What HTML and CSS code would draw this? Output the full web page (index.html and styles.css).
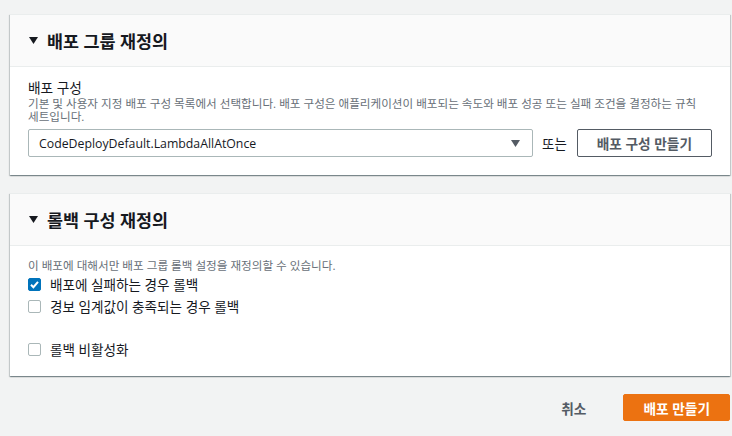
FILE: index.html
```
<!DOCTYPE html>
<html lang="ko">
<head>
<meta charset="utf-8">
<link rel="stylesheet" href="styles.css">
</head>
<body>
<section class="card">
  <div class="card-header">
    <svg class="caret" width="9" height="7" viewBox="0 0 9 7"><path d="M0 0H9L4.5 7Z" fill="#16191f"/></svg>
    <h2 class="title">배포 그룹 재정의</h2>
  </div>
  <div class="card-body body-config">
    <div class="label">배포 구성</div>
    <div class="desc">기본 및 사용자 지정 배포 구성 목록에서 선택합니다. 배포 구성은 애플리케이션이 배포되는 속도와 배포 성공 또는 실패 조건을 결정하는 규칙 세트입니다.</div>
    <div class="select-row">
      <div class="select">
        <span class="select-value">CodeDeployDefault.LambdaAllAtOnce</span>
        <svg class="select-caret" width="9" height="7" viewBox="0 0 9 7"><path d="M0 0H9L4.5 7Z" fill="#545b64"/></svg>
      </div>
      <span class="or">또는</span>
      <button class="btn-normal">배포 구성 만들기</button>
    </div>
  </div>
</section>

<section class="card card-second">
  <div class="card-header">
    <svg class="caret" width="9" height="7" viewBox="0 0 9 7"><path d="M0 0H9L4.5 7Z" fill="#16191f"/></svg>
    <h2 class="title">롤백 구성 재정의</h2>
  </div>
  <div class="card-body body-rollback">
    <div class="desc desc-single">이 배포에 대해서만 배포 그룹 롤백 설정을 재정의할 수 있습니다.</div>
    <label class="check-row">
      <span class="box checked"><svg width="13" height="13" viewBox="0 0 13 13"><path d="M3 6.8L5.4 9.2L10 3.8" fill="none" stroke="#fff" stroke-width="2"/></svg></span>
      <span class="check-text">배포에 실패하는 경우 롤백</span>
    </label>
    <label class="check-row">
      <span class="box"></span>
      <span class="check-text">경보 임계값이 충족되는 경우 롤백</span>
    </label>
    <label class="check-row check-separate">
      <span class="box"></span>
      <span class="check-text">롤백 비활성화</span>
    </label>
  </div>
</section>

<div class="footer">
  <button class="btn-link">취소</button>
  <button class="btn-primary">배포 만들기</button>
</div>
</body>
</html>
```

FILE: styles.css
```
html, body {
  margin: 0;
  background: #f2f3f3;
}
body {
  padding: 14px 2px 0 10px;
  font-family: "Open Sans", "Noto Sans CJK KR", sans-serif;
  font-size: 13.7px;
  color: #16191f;
}
.card {
  background: #fff;
  border-top: 1px solid #eaeded;
  box-shadow: 0 1px 1px 0 rgba(0, 28, 36, 0.3), 1px 1px 1px 0 rgba(0, 28, 36, 0.15), -1px 1px 1px 0 rgba(0, 28, 36, 0.15);
}
.card-second {
  margin-top: 18px;
}
.card-header {
  height: 51px;
  background: #fafafa;
  border-bottom: 1px solid #eaeded;
  display: flex;
  align-items: center;
  padding: 0 18px 0 19px;
  gap: 9px;
}
.caret {
  flex: none;
}
.title {
  margin: 0;
  font-size: 17.4px;
  font-weight: 700;
  line-height: 22px;
  color: #16191f;
}
.card-body {
  padding: 12px 18px 18px 18px;
}
.label {
  line-height: 18px;
  font-size: 13.7px;
  color: #16191f;
}
.desc {
  font-size: 11.6px;
  line-height: 13px;
  color: #687078;
  word-break: keep-all;
}
.select-row {
  margin-top: 6px;
  display: flex;
  align-items: center;
}
.select {
  flex: 1;
  height: 28px;
  box-sizing: border-box;
  border: 1px solid #aab7b8;
  border-radius: 2px;
  display: flex;
  align-items: center;
  justify-content: space-between;
  padding: 0 12px 0 10px;
  font-size: 12.3px;
}
.or {
  margin: 0 10px 0 9px;
  font-size: 13.4px;
  color: #16191f;
}
.btn-normal {
  height: 28px;
  box-sizing: border-box;
  border: 1px solid #545b64;
  border-radius: 2px;
  background: #fff;
  color: #545b64;
  font-family: inherit;
  font-size: 13.7px;
  font-weight: 700;
  padding: 0 19px;
}
.body-rollback {
  padding: 13px 18px 16px 18px;
}
.desc-single {
  line-height: 14px;
}
.check-row {
  display: flex;
  align-items: center;
  gap: 9px;
  height: 22px;
}
.check-separate {
  margin-top: 21px;
}
.box {
  width: 13px;
  height: 13px;
  box-sizing: border-box;
  border: 1px solid #aab7b8;
  border-radius: 2px;
  background: #fff;
  display: flex;
}
.box.checked {
  background: #0073bb;
  border-color: #0073bb;
}
.box.checked svg {
  margin: -1px;
}
.check-text {
  font-size: 13.6px;
  color: #16191f;
}
.footer {
  margin-top: 18px;
  display: flex;
  justify-content: flex-end;
  align-items: center;
  gap: 18px;
}
.btn-link {
  height: 27px;
  border: none;
  background: transparent;
  color: #545b64;
  font-family: inherit;
  font-size: 13.7px;
  font-weight: 700;
  padding: 0 19px;
}
.btn-primary {
  height: 27px;
  border: 1px solid #ec7211;
  border-radius: 2px;
  background: #ec7211;
  color: #fff;
  font-family: inherit;
  font-size: 13.7px;
  font-weight: 700;
  padding: 0 19px;
}
```
